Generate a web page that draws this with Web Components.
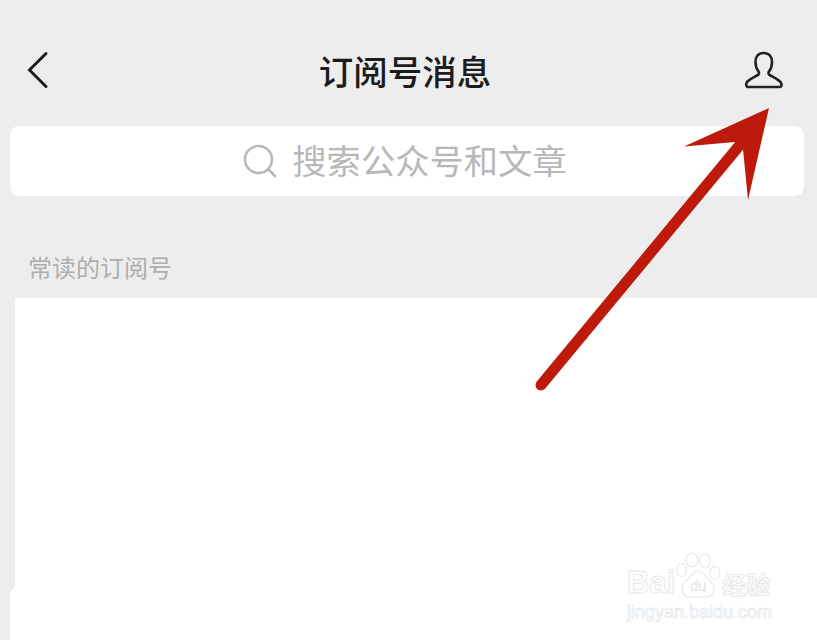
<!DOCTYPE html>
<html lang="zh">
<head>
<meta charset="utf-8">
<title>订阅号消息</title>
<style>
    html, body { margin: 0; height: 100%; }
    body {
        width: 817px;
        height: 640px;
        overflow: hidden;
        position: relative;
        background: #ededed;
        font-family: "Noto Sans CJK SC", "Liberation Sans", sans-serif;
        display: flex;
        flex-direction: column;
    }
</style>
</head>
<body>
<nav-bar>订阅号消息</nav-bar>
<search-box>搜索公众号和文章</search-box>
<section-label>常读的订阅号</section-label>
<list-panel></list-panel>
<arrow-mark></arrow-mark>
<baidu-mark></baidu-mark>

<script>
class NavBar extends HTMLElement {
    constructor() {
        super();
        this.shadowDOM = this.attachShadow({mode:'open'});
    }

    connectedCallback() {
        this.shadowDOM.innerHTML = `
        <style>
            :host {
                display: grid;
                grid-template-columns: 1fr auto 1fr;
                align-items: center;
                height: 126px;
                padding: 14px 33px 0 26px;
                box-sizing: border-box;
                color: #1c1c1c;
            }
            .title {
                font-size: 34.500px;
                line-height: 50px;
                font-weight: 500;
            }
            svg { display: block; }
            .user { justify-self: end; }
        </style>
        <svg width="24" height="38" viewBox="0 0 24 38" fill="none" stroke="#1c1c1c" stroke-width="3" stroke-linecap="round" stroke-linejoin="miter">
            <path d="M20 2.500 L3.500 19 L20 35.500"/>
        </svg>
        <div class="title"><slot></slot></div>
        <svg class="user" width="40" height="38" viewBox="0 0 40 38" fill="none" stroke="#222" stroke-width="2.600" stroke-linejoin="round">
            <path d="M19.500 2 C14 2 11.500 6 11.500 11 C11.500 15 12.500 18 14.500 20.500 C15.500 22 15 23.500 13 24.500 C9.500 26.500 6 28 3.500 30.500 C1.500 32.500 1.800 36 4.500 36 L35.500 36 C38 36 38.300 32.500 36 30.500 C33.500 28 30 26.500 26.500 24.500 C24.500 23.500 24 22 25 20.500 C27 18 28 15 28 11 C28 6 25.500 2 19.500 2 Z"/>
        </svg>
        `;
    }
}

class SearchBox extends HTMLElement {
    constructor() {
        super();
        this.shadowDOM = this.attachShadow({mode:'open'});
    }

    connectedCallback() {
        this.shadowDOM.innerHTML = `
        <style>
            :host {
                display: flex;
                align-items: center;
                justify-content: center;
                gap: 15px;
                height: 70px;
                margin: 0 13px 0 10px;
                padding-right: 4px;
                border-radius: 9px;
                background: #fff;
                color: #b8b8b8;
                font-size: 34.300px;
            }
            svg { display: block; flex: none; }
            span { line-height: 50px; position: relative; top: -2px; }
        </style>
        <svg width="34" height="34" viewBox="0 0 34 34" fill="none" stroke="#b8b8b8" stroke-width="2.600" stroke-linecap="round">
            <circle cx="15.500" cy="15.500" r="13.500"/>
            <path d="M25.500 25.500 L32 32"/>
        </svg>
        <span><slot></slot></span>
        `;
    }
}

class SectionLabel extends HTMLElement {
    constructor() {
        super();
        this.shadowDOM = this.attachShadow({mode:'open'});
    }

    connectedCallback() {
        this.shadowDOM.innerHTML = `
        <style>
            :host {
                display: flex;
                align-items: center;
                height: 102px;
                padding: 38px 0 0 28px;
                box-sizing: border-box;
                color: #adadad;
                font-size: 24px;
            }
        </style>
        <slot></slot>
        `;
    }
}

class ListPanel extends HTMLElement {
    constructor() {
        super();
        this.shadowDOM = this.attachShadow({mode:'open'});
    }

    connectedCallback() {
        this.shadowDOM.innerHTML = `
        <style>
            :host {
                display: block;
                flex: 1;
                margin-left: 15px;
                position: relative;
                background: #fff;
            }
            .lower {
                position: absolute;
                left: -5px;
                right: 0;
                top: 289px;
                bottom: 0;
                background: #fff;
                border-top-left-radius: 8px;
            }
        </style>
        <div class="lower"></div>
        `;
    }
}

class ArrowMark extends HTMLElement {
    constructor() {
        super();
        this.shadowDOM = this.attachShadow({mode:'open'});
    }

    connectedCallback() {
        this.shadowDOM.innerHTML = `
        <style>
            :host {
                display: block;
                position: absolute;
                left: 0;
                top: 0;
                pointer-events: none;
            }
            svg { display: block; }
        </style>
        <svg width="817" height="640" viewBox="0 0 817 640">
            <path d="M541 385 L739 146" stroke="#bd1a0b" stroke-width="11" stroke-linecap="round" fill="none"/>
            <path d="M769 108 L684 146.500 L735 142 L743 149 L748 200 Z" fill="#bd1a0b"/>
        </svg>
        `;
    }
}

class BaiduMark extends HTMLElement {
    constructor() {
        super();
        this.shadowDOM = this.attachShadow({mode:'open'});
    }

    connectedCallback() {
        this.shadowDOM.innerHTML = `
        <style>
            :host {
                display: block;
                position: absolute;
                left: 627px;
                top: 551px;
                width: 150px;
                height: 74px;
                color: #fff;
                -webkit-text-stroke: 1px #e8e8e8;
                font-family: "Liberation Sans", sans-serif;
            }
            .top {
                display: flex;
                align-items: flex-end;
                height: 48px;
            }
            .bai { font-size: 31px; line-height: 32px; font-weight: 700; letter-spacing: 0; }
            .paw { position: relative; width: 46px; height: 48px; flex: none; }
            .paw svg { display: block; }
            .paw span {
                position: absolute;
                left: 9px;
                bottom: 5px;
                width: 28px;
                text-align: center;
                font-size: 15px;
                line-height: 16px;
                -webkit-text-stroke: 0.6px #e0e0e0;
            }
            .cn {
                font-family: "Noto Sans CJK SC", sans-serif;
                font-size: 24px;
                line-height: 30px;
                font-weight: 700;
                margin-left: 1px;
            }
            .url {
                font-size: 18px;
                line-height: 24px;
                margin-top: 1px;
                white-space: nowrap;
                -webkit-text-stroke: 0.7px #e6e6e6;
            }
        </style>
        <div class="top">
            <span class="bai">Bai</span>
            <div class="paw">
                <svg width="46" height="48" viewBox="0 0 46 48" fill="#fff" stroke="#e8e8e8" stroke-width="1.200">
                    <ellipse cx="17" cy="9" rx="6" ry="7"/>
                    <ellipse cx="30" cy="10" rx="5.500" ry="7"/>
                    <ellipse cx="6.500" cy="19" rx="5" ry="6.500"/>
                    <ellipse cx="40" cy="22" rx="5" ry="6.500"/>
                    <path d="M23 20 C17 20 15 27 10 31 C5 35 6 46 15 46 C20 46 26 46 31 46 C40 46 41 35 36 31 C31 27 29 20 23 20 Z"/>
                </svg>
                <span>du</span>
            </div>
            <span class="cn">经验</span>
        </div>
        <div class="url">jingyan.baidu.com</div>
        `;
    }
}

customElements.define('nav-bar', NavBar);
customElements.define('search-box', SearchBox);
customElements.define('section-label', SectionLabel);
customElements.define('list-panel', ListPanel);
customElements.define('arrow-mark', ArrowMark);
customElements.define('baidu-mark', BaiduMark);
</script>
</body>
</html>
